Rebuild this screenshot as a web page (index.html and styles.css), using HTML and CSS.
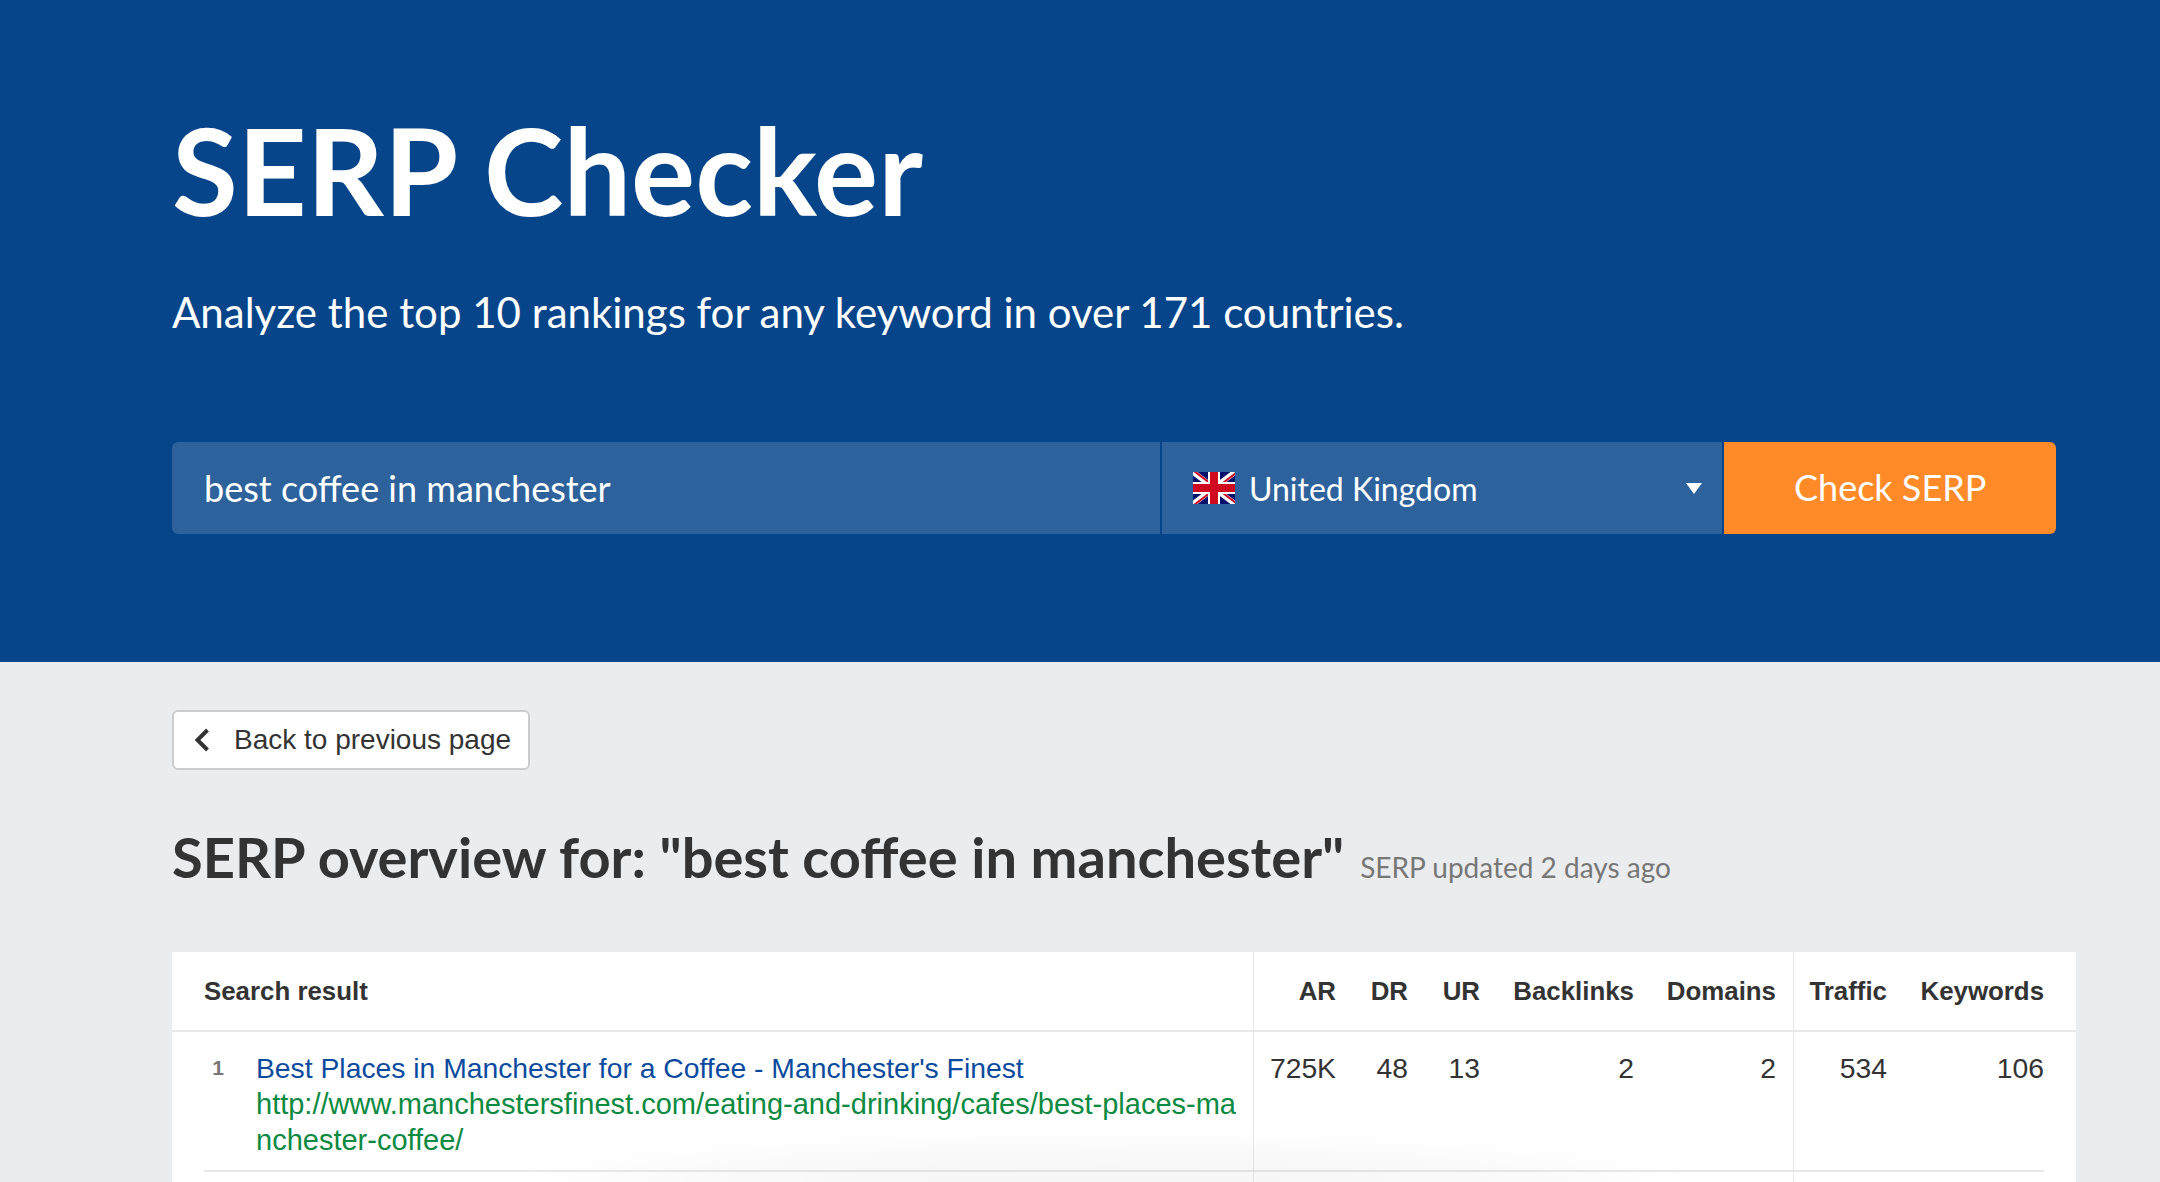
FILE: index.html
```html
<!DOCTYPE html>
<html lang="en">
<head>
<meta charset="utf-8">
<title>SERP Checker</title>
<link rel="stylesheet" href="styles.css">
</head>
<body>
<header class="hero">
  <h1 class="hero-title">SERP Checker</h1>
  <p class="hero-sub">Analyze the top 10 rankings for any keyword in over 171 countries.</p>
  <form class="search">
    <div class="search-input">best coffee in manchester</div>
    <div class="search-country">
      <svg class="flag" viewBox="0 0 42 32" aria-hidden="true">
        <rect width="42" height="32" fill="#00106b"/>
        <path d="M0 0L42 32M42 0L0 32" stroke="#fff" stroke-width="5.5"/>
        <path d="M0 0L21 16M42 32L21 16" stroke="#cf0a1f" stroke-width="2" transform="translate(1 -1)"/>
        <path d="M42 0L21 16M0 32L21 16" stroke="#cf0a1f" stroke-width="2" transform="translate(1 1)"/>
        <path d="M21 0V32M0 16H42" stroke="#fff" stroke-width="12"/>
        <path d="M21 0V32M0 16H42" stroke="#cf0a1f" stroke-width="8"/>
      </svg>
      <span class="country-name">United Kingdom</span>
      <svg class="caret" viewBox="0 0 16 11" aria-hidden="true"><path d="M0 0H16L8 11Z" fill="#fff"/></svg>
    </div>
    <div class="search-btn">Check SERP</div>
  </form>
</header>
<main class="content">
  <a class="back">
    <svg class="chevron" viewBox="0 0 16 24" aria-hidden="true"><path d="M13.5 2L3.5 12L13.5 22" fill="none" stroke="#333" stroke-width="4"/></svg>
    <span>Back to previous page</span>
  </a>
  <div class="overview">
    <h2 class="overview-title">SERP overview for: "best coffee in manchester"</h2>
    <span class="overview-updated">SERP updated 2 days ago</span>
  </div>
  <section class="results">
    <div class="head-wrap">
      <div class="cols cols-head">
        <div class="left">Search result</div>
        <div>AR</div><div>DR</div><div>UR</div><div>Backlinks</div><div>Domains</div><div>Traffic</div><div>Keywords</div>
      </div>
    </div>
    <div class="cols row">
      <div class="result">
        <span class="rank">1</span>
        <div class="result-body">
          <a class="result-title">Best Places in Manchester for a Coffee - Manchester's Finest</a>
          <a class="result-url">http://www.manchestersfinest.com/eating-and-drinking/cafes/best-places-manchester-coffee/</a>
        </div>
      </div>
      <div>725K</div><div>48</div><div>13</div><div>2</div><div>2</div><div>534</div><div>106</div>
    </div>
  </section>
  <div class="fade"></div>
</main>
</body>
</html>
```
FILE: styles.css
```css
* { box-sizing: border-box; }
html, body { margin: 0; height: 1182px; overflow: hidden; }
body { background: #ebecee; font-family: "Liberation Sans", Arial, sans-serif; color: #333; }

.hero { height: 662px; background: #06458a; padding: 102px 104px 0 172px; color: #fff; font-family: Lato, sans-serif; }
.hero-title { margin: 0; font-size: 120px; line-height: 136px; font-weight: 700; }
.hero-sub { margin: 46px 0 0; font-size: 42px; line-height: 56px; font-weight: 400; }
.search { display: flex; height: 92px; margin-top: 102px; }
.search-input { width: 989px; background: #2e629c; border-radius: 6px 0 0 6px; padding-left: 32px; font-size: 36px; line-height: 92px; }
.search-country { width: 561px; margin-left: 2px; background: #2e629c; display: flex; align-items: center; padding: 0 20px 0 31px; font-size: 32px; }
.flag { width: 42px; height: 32px; flex: none; }
.country-name { margin-left: 14px; flex: 1; }
.caret { width: 16px; height: 11px; flex: none; }
.search-btn { width: 332px; margin-left: 2px; background: #ff8a27; border-radius: 0 6px 6px 0; text-align: center; font-size: 36px; line-height: 90px; }

.content { padding: 48px 84px 0 172px; }
.back { display: inline-flex; align-items: center; height: 60px; width: 358px; background: #fff; border: 2px solid #ccc; border-radius: 6px; padding-left: 20px; font-size: 28px; color: #333; }
.chevron { width: 16px; height: 24px; flex: none; margin-right: 24px; }
.overview { display: flex; align-items: baseline; margin-top: 50px; height: 74px; font-family: Lato, sans-serif; }
.overview-title { margin: 0; font-size: 56px; line-height: 74px; font-weight: 700; color: #333; }
.overview-updated { margin-left: 16px; font-size: 28px; color: #777; }

.results { margin-top: 58px; height: 231px; background-color: #fff; background-image: linear-gradient(#e8e8e8, #e8e8e8), linear-gradient(#e8e8e8, #e8e8e8); background-repeat: no-repeat; background-size: 1px 100%; background-position: 1081px 0, 1621px 0; }
.cols { display: grid; grid-template-columns: 1049px 83px 72px 72px 154px 142px 111px 157px; text-align: right; font-size: 28.3px; }
.head-wrap { padding: 0 32px; height: 80px; border-bottom: 2px solid #e8e8e8; }
.cols-head { font-weight: 700; font-size: 25.85px; line-height: 78px; }
.left { text-align: left; }
.row { margin: 0 32px; padding: 18px 0 12px; line-height: 36px; border-bottom: 2px solid #e8e8e8; }
.result { display: flex; text-align: left; padding-right: 16px; }
.rank { width: 20px; margin-right: 32px; flex: none; text-align: right; font-size: 21px; font-weight: 700; color: #777; }
.result-body { min-width: 0; }
.result-title { display: block; color: #0a4b9f; }
.result-url { display: block; font-size: 29px; color: #0b8a41; word-break: break-all; }

.fade { position: absolute; left: 500px; top: 1130px; width: 1210px; height: 52px; pointer-events: none; background: radial-gradient(ellipse 605px 52px at 50% 100%, rgba(0,0,0,.035), rgba(0,0,0,.025) 60%, rgba(0,0,0,0)); }
```
